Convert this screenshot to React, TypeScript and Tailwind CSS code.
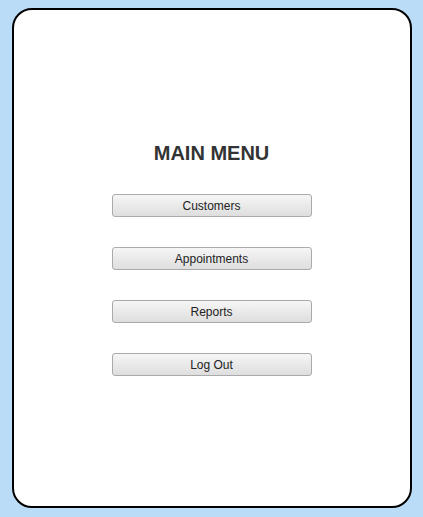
export default function App() {
  const items = ["Customers", "Appointments", "Reports", "Log Out"];

  return (
    <div className="min-h-[517px] w-full bg-[#bbdcf7] pt-2" style={{ fontFamily: '"Liberation Sans", Arial, sans-serif' }}>
      <div className="mx-auto box-border h-[500px] w-[400px] rounded-[20px] border-2 border-black bg-white">
        <div className="flex flex-col items-center pt-[131px]">
          <h1 className="text-[20px] font-bold leading-[24px] text-[#333]">MAIN MENU</h1>
          <div className="mt-[29px] flex flex-col gap-[30px]">
            {items.map((label) => (
              <button
                key={label}
                className="h-[23px] w-[200px] rounded-[3px] border border-[#aaa] bg-gradient-to-b from-[#f6f6f6] to-[#dedede] text-[12px] text-[#222]"
              >
                {label}
              </button>
            ))}
          </div>
        </div>
      </div>
    </div>
  );
}
